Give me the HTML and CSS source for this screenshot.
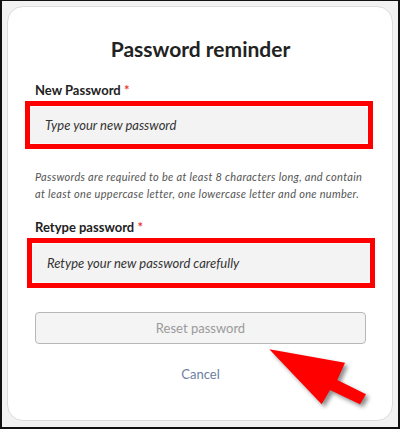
FILE: index.html
```html
<!DOCTYPE html>
<html lang="en">
<head>
    <meta charset="UTF-8">
    <meta name="viewport" content="width=device-width, initial-scale=1.0">
    <title>Password reminder</title>
    <link rel="stylesheet" href="styles.css">
</head>
<body>
    <div class="frame">
        <div class="card">
            <h1>Password reminder</h1>

            <form id="resetForm">
                <label for="newPassword">New Password <span class="req">*</span></label>
                <div class="mark">
                    <input type="password" id="newPassword" placeholder="Type your new password">
                </div>

                <p class="hint">Passwords are required to be at least 8 characters long, and contain at least one uppercase letter, one lowercase letter and one number.</p>

                <label for="retypePassword">Retype password <span class="req">*</span></label>
                <div class="mark mark-tall">
                    <input type="password" id="retypePassword" placeholder="Retype your new password carefully">
                </div>

                <button type="submit" disabled>Reset password</button>
                <a class="cancel" href="#">Cancel</a>
            </form>

            <!-- 指示箭头 -->
            <svg class="arrow" width="120" height="80" viewBox="0 0 120 80">
                <polygon points="9.3,9.3 85,22.7 77.3,40 106,54.3 100,64.3 70,50 61.7,64.3" fill="#ff0000"/>
            </svg>
        </div>
    </div>
</body>
</html>
```

FILE: styles.css
```css
body {
    margin: 0;
    background: #f2f2f2;
    font-family: Lato, "Noto Sans", sans-serif;
}

.frame {
    height: 429px;
    box-sizing: border-box;
    border-style: solid;
    border-color: #111;
    border-width: 1px 2px 2px 2px;
    padding: 5px 5px 6px 5px;
}

.card {
    position: relative;
    height: 100%;
    box-sizing: border-box;
    background: #fff;
    border: 1px solid #dcdcdc;
    border-radius: 16px;
    padding: 0 26px 0 27px;
}

h1 {
    margin: 28px 0 0 0;
    font-size: 21px;
    line-height: 28px;
    font-weight: 700;
    color: #222;
    text-align: center;
}

form {
    display: flex;
    flex-direction: column;
}

label {
    display: block;
    margin-top: 18px;
    font-size: 13px;
    line-height: 18px;
    font-weight: 700;
    color: #222;
}

.req {
    color: #e53935;
}

/* 红色标注框 */
.mark {
    margin: 2px -7px 0 -10px;
    border: 5px solid #ff0000;
    height: 38px;
}

.mark-tall {
    margin: 2px -9px 0 -8px;
    height: 40px;
}

.mark input {
    display: block;
    width: 100%;
    height: 100%;
    box-sizing: border-box;
    margin: 0;
    padding: 0 0 0 14px;
    border: 1px solid #fafafa;
    border-radius: 4px;
    background: #f3f3f3;
    font-family: inherit;
    font-size: 13px;
    color: #333;
}

.mark input::placeholder {
    color: #333;
    font-style: italic;
}

.hint {
    margin: 19px 0 0 0;
    font-size: 11px;
    line-height: 17px;
    letter-spacing: 0.3px;
    font-style: italic;
    color: #555;
}

.hint + label {
    margin-top: 16px;
}

button {
    margin-top: 24px;
    height: 32px;
    border: 1px solid #b8b8b8;
    border-radius: 4px;
    background: #f4f4f4;
    color: #9a9a9a;
    font-family: inherit;
    font-size: 13px;
}

.cancel {
    margin-top: 21px;
    text-align: center;
    font-size: 13px;
    line-height: 18px;
    color: #6b7ea3;
    text-decoration: none;
}

.arrow {
    position: absolute;
    left: 252px;
    top: 333px;
    filter: drop-shadow(3px 3px 2px rgba(0, 0, 0, 0.45));
}
```
